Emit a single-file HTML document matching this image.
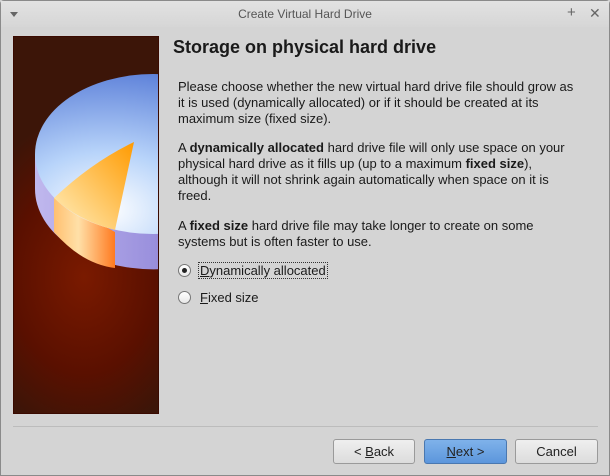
<!DOCTYPE html>
<html><head><style>
*{margin:0;padding:0;box-sizing:border-box}
body{width:610px;height:476px;background:#d4d4d4;font-family:"Liberation Sans",sans-serif;position:relative;overflow:hidden;color:#1a1a1a}
.win{position:absolute;left:0;top:0;width:610px;height:476px;border:1px solid #8a8a8a;border-radius:4px 4px 0 0;background:#d4d4d4}
.tb{position:absolute;left:0;top:0;width:608px;height:26px;background:linear-gradient(#e2e2e2,#d6d6d6)}
.tt{position:absolute;top:6px;width:100%;text-align:center;font-size:12px;color:#555}
.pan{position:absolute;left:12px;top:35px;width:146px;height:378px;overflow:hidden;background:radial-gradient(ellipse 120px 160px at 70px 240px,#7a1a00,#5a1000 60%,#3c1508);border:1px solid #3a0a00}
h1{position:absolute;left:172px;top:36px;font-size:18px;font-weight:bold;color:#1a1a1a}
p{position:absolute;left:177px;width:404px;font-size:13px;line-height:16px}
.rad{position:absolute;left:177px;width:13px;height:13px;border-radius:50%;border:1px solid #777;background:linear-gradient(#fff,#e8e8e8)}
.lab{position:absolute;left:199px;font-size:13px}
.sep{position:absolute;left:12px;top:425px;width:585px;height:1px;background:#f6f6f6;border-top:1px solid #bcbcbc}
.btn{position:absolute;top:438px;height:25px;border:1px solid #9a9a9a;border-radius:3px;background:linear-gradient(#efefef,#dcdcdc);font-size:13px;text-align:center;line-height:23px;color:#222}
</style></head><body>
<div class="win">
<div class="tb"><div class="tt">Create Virtual Hard Drive</div>
<svg style="position:absolute;left:8px;top:9px" width="10" height="8"><path d="M1 2h8l-4 5z" fill="#666"/></svg>
<div style="position:absolute;left:566px;top:3px;font-size:15px;color:#666">+</div>
<div style="position:absolute;left:588px;top:4px;font-size:14px;color:#666">✕</div>
</div>
<div class="pan">
<svg width="146" height="378" viewBox="12 35 146 378" style="position:absolute;left:0;top:0">
<defs>
<linearGradient id="side" x1="0" x2="1"><stop offset="0" stop-color="#c0b8ee"/><stop offset="0.5" stop-color="#9a90dd"/><stop offset="1" stop-color="#5a3a7a"/></linearGradient>
<radialGradient id="top" cx="0.3" cy="0.85" r="0.9"><stop offset="0" stop-color="#ffffff"/><stop offset="0.4" stop-color="#b8d4fa"/><stop offset="1" stop-color="#5a7ed8"/></radialGradient>
<linearGradient id="ors" x1="0" x2="1"><stop offset="0" stop-color="#ffc070"/><stop offset="0.4" stop-color="#ffe0a8"/><stop offset="1" stop-color="#ff7a20"/></linearGradient>
<linearGradient id="ort" x1="1" y1="0" x2="0" y2="1"><stop offset="0" stop-color="#ff9a00"/><stop offset="1" stop-color="#fff0c0"/></linearGradient>
</defs>
<path d="M33 152 L33 187 A118 80 0 0 0 270 187 L270 152 Z" fill="url(#side)"/>
<path d="M52 196 L52 230 Q80 262 113 266 L113 230 Z" fill="url(#ors)"/>
<ellipse cx="151" cy="152" rx="118" ry="80" fill="url(#top)"/>
<path d="M132 140 L113 228 Q75 218 52 196 Q90 160 132 140Z" fill="url(#ort)"/>
</svg>
</div>
<h1>Storage on physical hard drive</h1>
<p style="top:78px">Please choose whether the new virtual hard drive file should grow as it is used (dynamically allocated) or if it should be created at its maximum size (fixed size).</p>
<p style="top:139px">A <b>dynamically allocated</b> hard drive file will only use space on your physical hard drive as it fills up (up to a maximum <b>fixed size</b>), although it will not shrink again automatically when space on it is freed.</p>
<p style="top:217px">A <b>fixed size</b> hard drive file may take longer to create on some systems but is often faster to use.</p>
<div class="rad" style="top:263px"><div style="position:absolute;left:3px;top:3px;width:5px;height:5px;border-radius:50%;background:#222"></div></div>
<div class="lab" style="top:261px;border:1px dotted #333;left:197px;padding:0 1px"><u>D</u>ynamically allocated</div>
<div class="rad" style="top:290px"></div>
<div class="lab" style="top:289px"><u>F</u>ixed size</div>
<div class="sep"></div>
<div class="btn" style="left:332px;width:82px">&lt; <u>B</u>ack</div>
<div class="btn" style="left:423px;width:83px;background:linear-gradient(#7fb2ea,#5c96dc);border-color:#4a78b0"><u>N</u>ext &gt;</div>
<div class="btn" style="left:514px;width:83px">Cancel</div>
</div>
</body></html>
